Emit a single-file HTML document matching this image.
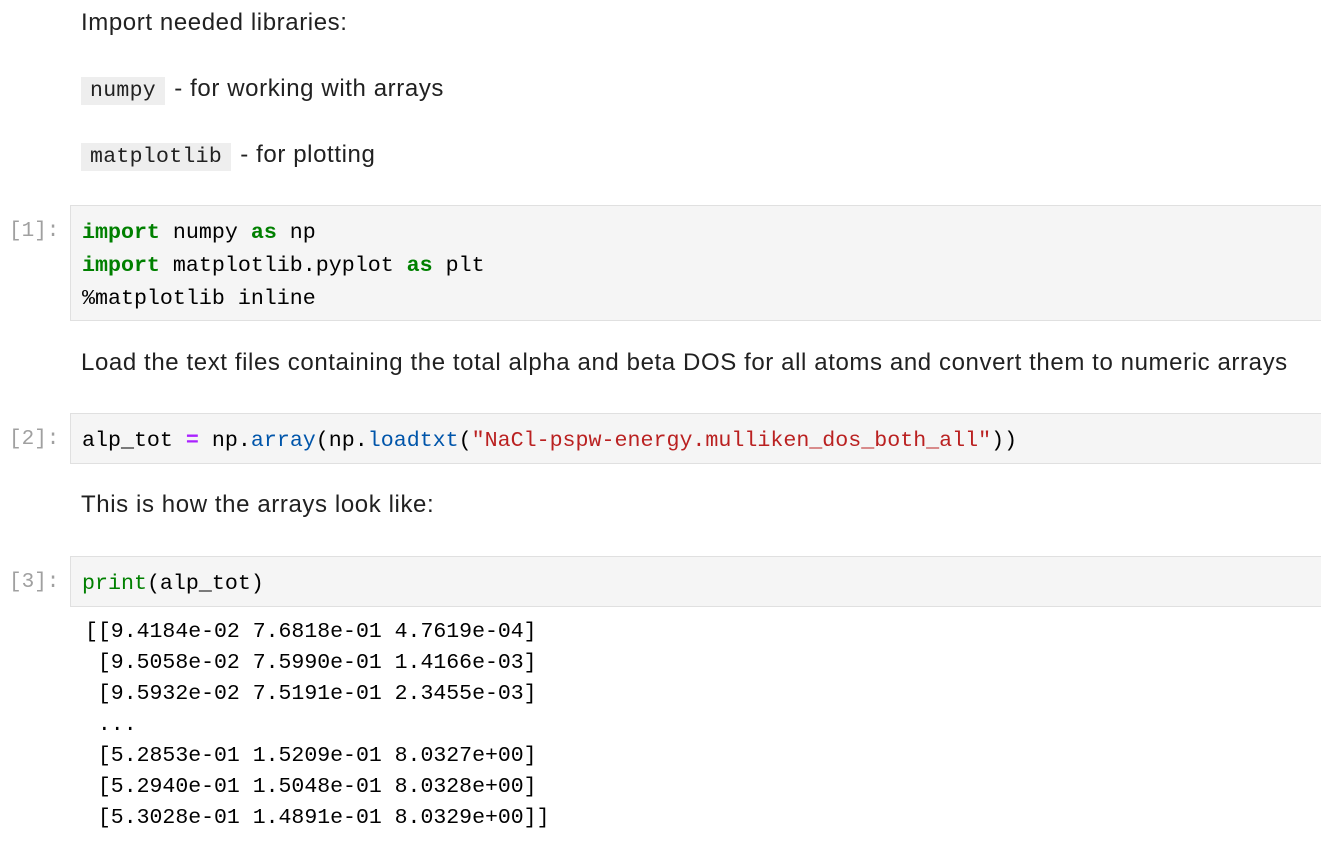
<!DOCTYPE html>
<html><head><meta charset="utf-8"><style>
body{margin:0;background:#fff;width:1321px;height:844px;overflow:hidden;position:relative;font-family:"Liberation Sans",sans-serif;color:#212121}
.t{position:absolute;left:81px;font-size:24px;letter-spacing:0.6px;line-height:30px;white-space:nowrap}
.c{font-family:"Liberation Mono",monospace;font-size:21.5px;letter-spacing:0.3px;background:#eee;padding:2px 9px;margin-right:2px}
.box{position:absolute;left:70px;right:0;background:#f5f5f5;border:1px solid #e0e0e0;border-right:none}
.code{position:absolute;left:82px;font-family:"Liberation Mono",monospace;font-size:21.65px;line-height:33px;white-space:pre;color:#000}
.p{position:absolute;left:9px;font-family:"Liberation Mono",monospace;font-size:21px;color:#a0a0a0}
.k{color:#008000;font-weight:bold}.f{color:#008000}.b{color:#0055aa}.s{color:#ba2121}.o{color:#aa22ff;font-weight:bold}
.out{position:absolute;left:85px;top:617px;font-family:"Liberation Mono",monospace;font-size:21.5px;line-height:31px;white-space:pre;color:#000}
</style></head><body>
<div class="t" style="top:8px">Import needed libraries:</div>
<div class="t" style="top:74px"><span class="c">numpy</span> - for working with arrays</div>
<div class="t" style="top:140px"><span class="c">matplotlib</span> - for plotting</div>
<div class="box" style="top:205px;height:114px"></div>
<div class="p" style="top:220px">[1]:</div>
<div class="code" style="top:216px"><span class="k">import</span> numpy <span class="k">as</span> np
<span class="k">import</span> matplotlib.pyplot <span class="k">as</span> plt
%matplotlib inline</div>
<div class="t" style="top:348px">Load the text files containing the total alpha and beta DOS for all atoms and convert them to numeric arrays</div>
<div class="box" style="top:413px;height:49px"></div>
<div class="p" style="top:428px">[2]:</div>
<div class="code" style="top:424px">alp_tot <span class="o">=</span> np.<span class="b">array</span>(np.<span class="b">loadtxt</span>(<span class="s">"NaCl-pspw-energy.mulliken_dos_both_all"</span>))</div>
<div class="t" style="top:490px">This is how the arrays look like:</div>
<div class="box" style="top:556px;height:49px"></div>
<div class="p" style="top:571px">[3]:</div>
<div class="code" style="top:567px"><span class="f">print</span>(alp_tot)</div>
<div class="out">[[9.4184e-02 7.6818e-01 4.7619e-04]
 [9.5058e-02 7.5990e-01 1.4166e-03]
 [9.5932e-02 7.5191e-01 2.3455e-03]
 ...
 [5.2853e-01 1.5209e-01 8.0327e+00]
 [5.2940e-01 1.5048e-01 8.0328e+00]
 [5.3028e-01 1.4891e-01 8.0329e+00]]</div>
</body></html>
